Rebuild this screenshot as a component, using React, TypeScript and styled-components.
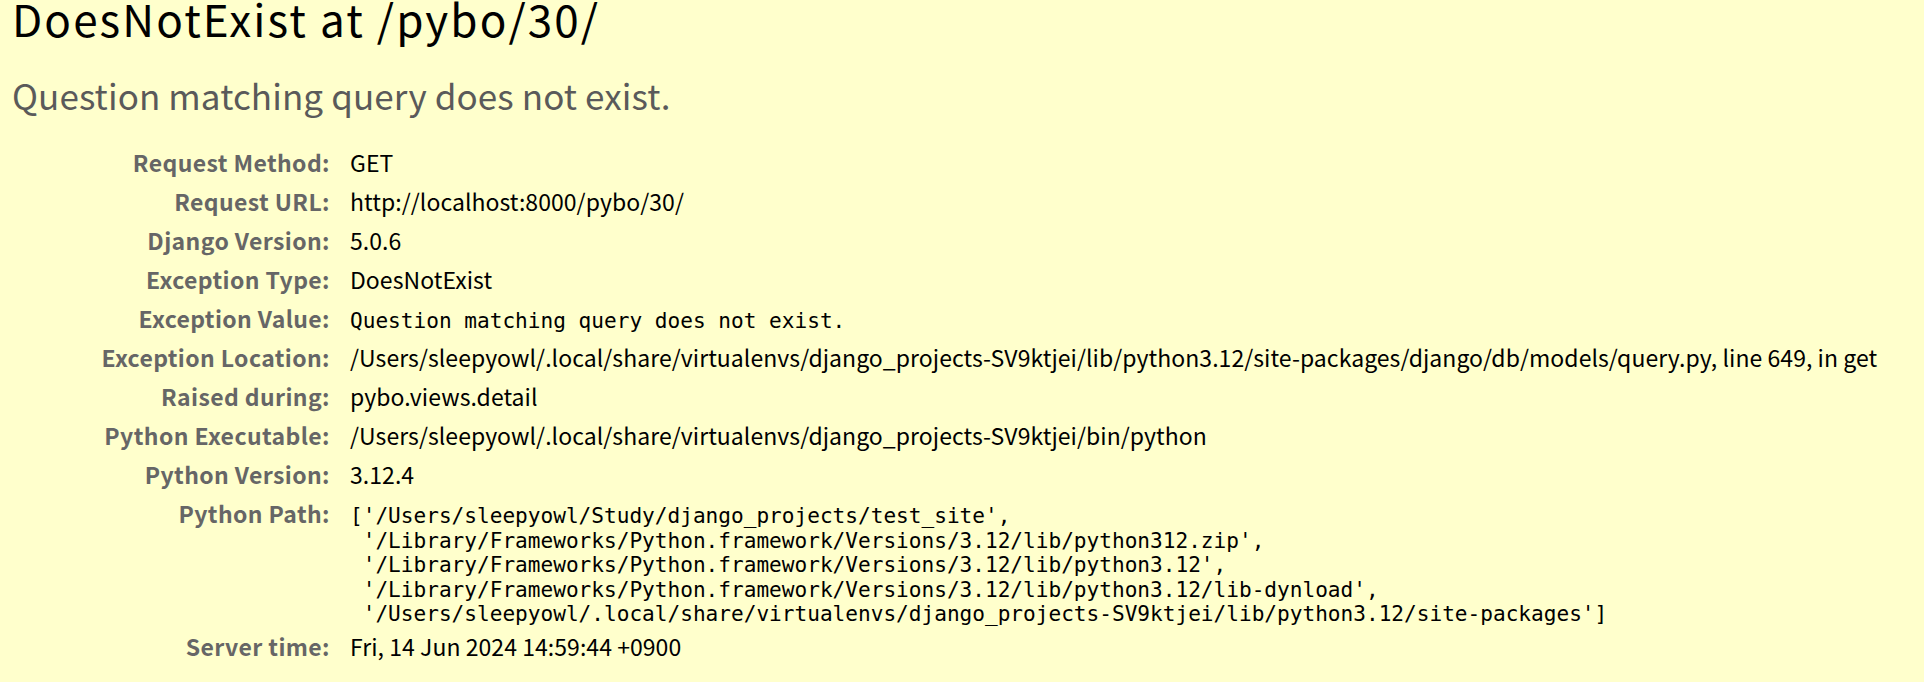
import React from "react";
import styled, { createGlobalStyle } from "styled-components";

const Global = createGlobalStyle`
  html, body { margin: 0; padding: 0; background: #ffffcc; }
  body { font-family: "Noto Sans CJK KR", "Noto Sans", sans-serif; color: #000; }
`;

const Summary = styled.section`
  background: #ffffcc;
  padding: 0 12px 20px 12px;
  min-height: 682px;
  box-sizing: border-box;
`;

const Title = styled.h1`
  margin: 0;
  font-size: 44px;
  line-height: 37px;
  letter-spacing: 2.1px;
  font-weight: 400;
  color: #000;
  white-space: nowrap;
`;

const Subtitle = styled.h2`
  margin: 38px 0 0 0;
  font-size: 35px;
  line-height: 40px;
  letter-spacing: 0.1px;
  font-weight: 400;
  color: #5a5a5a;
  white-space: nowrap;
`;

const Meta = styled.div`
  margin-top: 28px;
  display: flex;
  flex-direction: column;
`;

const Row = styled.div`
  display: grid;
  grid-template-columns: 318px 1fr;
  column-gap: 20px;
  align-items: baseline;
  padding: 5px 0;
  font-size: 23px;
  line-height: 29px;
`;

const Label = styled.div`
  text-align: right;
  font-weight: 700;
  letter-spacing: 0.4px;
  color: #666;
  white-space: nowrap;
`;

const Value = styled.div<{ $mono?: boolean }>`
  color: #000;
  white-space: ${(p) => (p.$mono ? "pre" : "nowrap")};
  font-family: ${(p) =>
    p.$mono ? '"DejaVu Sans Mono", "Liberation Mono", monospace' : "inherit"};
  font-size: ${(p) => (p.$mono ? "21.1px" : "inherit")};
  line-height: ${(p) => (p.$mono ? "24.5px" : "inherit")};
  letter-spacing: ${(p) => (p.$mono ? "0" : "0.05px")};
  margin-bottom: ${(p) => (p.$mono ? "-5px" : "0")};
`;

const pythonPath = `['/Users/sleepyowl/Study/django_projects/test_site',
 '/Library/Frameworks/Python.framework/Versions/3.12/lib/python312.zip',
 '/Library/Frameworks/Python.framework/Versions/3.12/lib/python3.12',
 '/Library/Frameworks/Python.framework/Versions/3.12/lib/python3.12/lib-dynload',
 '/Users/sleepyowl/.local/share/virtualenvs/django_projects-SV9ktjei/lib/python3.12/site-packages']`;

const rows: { label: string; value: string; mono?: boolean }[] = [
  { label: "Request Method:", value: "GET" },
  { label: "Request URL:", value: "http://localhost:8000/pybo/30/" },
  { label: "Django Version:", value: "5.0.6" },
  { label: "Exception Type:", value: "DoesNotExist" },
  { label: "Exception Value:", value: "Question matching query does not exist.", mono: true },
  {
    label: "Exception Location:",
    value:
      "/Users/sleepyowl/.local/share/virtualenvs/django_projects-SV9ktjei/lib/python3.12/site-packages/django/db/models/query.py, line 649, in get",
  },
  { label: "Raised during:", value: "pybo.views.detail" },
  {
    label: "Python Executable:",
    value: "/Users/sleepyowl/.local/share/virtualenvs/django_projects-SV9ktjei/bin/python",
  },
  { label: "Python Version:", value: "3.12.4" },
  { label: "Python Path:", value: pythonPath, mono: true },
  { label: "Server time:", value: "Fri, 14 Jun 2024 14:59:44 +0900" },
];

export default function App() {
  return (
    <>
      <Global />
      <Summary>
        <Title>DoesNotExist at /pybo/30/</Title>
        <Subtitle>Question matching query does not exist.</Subtitle>
        <Meta>
          {rows.map((r) => (
            <Row key={r.label}>
              <Label>{r.label}</Label>
              <Value $mono={r.mono}>{r.value}</Value>
            </Row>
          ))}
        </Meta>
      </Summary>
    </>
  );
}
